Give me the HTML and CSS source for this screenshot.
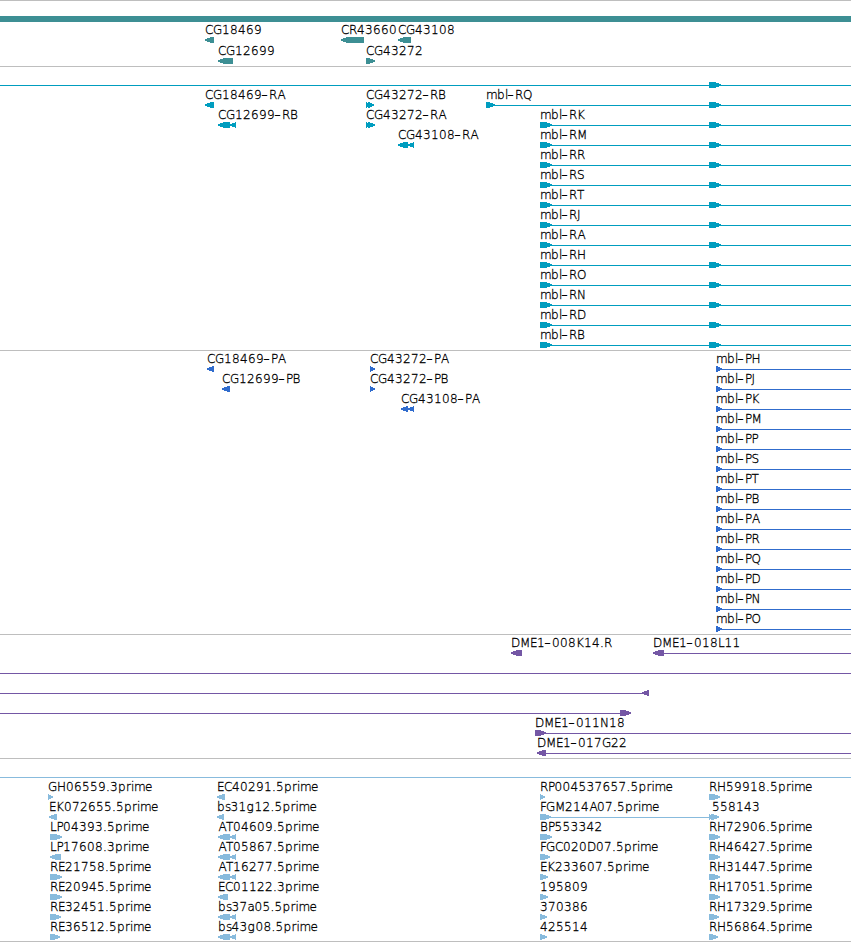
FILE: index.html
```html
<!DOCTYPE html>
<html lang="en">
<head>
    <meta charset="UTF-8">
    <title>mbl region</title>
    <link rel="stylesheet" href="styles.css">
</head>
<body>
    <div class="browser">
        <div class="track track-gene" id="gene"></div>
        <div class="track track-mrna" id="mrna"></div>
        <div class="track track-cds" id="cds"></div>
        <div class="track track-bac" id="bac"></div>
        <div class="track track-est" id="est"></div>
    </div>
    <script src="tracks.js"></script>
</body>
</html>
```
FILE: styles.css
```css
body {
    margin: 0;
    background-color: #fff;
    overflow: hidden;
}
.browser {
    display: flex;
    flex-direction: column;
    width: 851px;
    height: 942px;
    box-sizing: border-box;
    border-top: 1px solid #bebebe;
}
.track {
    box-sizing: border-box;
    padding-top: 3px;
    border-bottom: 1px solid #bebebe;
}
.track-gene { height: 66px; color: #3d8f94; }
.track-mrna { height: 284px; color: #009dbf; }
.track-cds { height: 284px; color: #306ccd; }
.track-bac { height: 124px; color: #7457a5; }
.track-est { height: 183px; color: #88bbdd; }

.row {
    display: block;
    width: 851px;
    height: 20px;
    overflow: visible;
}
.track-gene .row {
    height: 21px;
}
.glyph {
    fill: currentColor;
    shape-rendering: crispEdges;
}
.label {
    fill: #000;
    stroke: #000;
    stroke-width: 0.3px;
    font-family: "DejaVu Sans", sans-serif;
    font-size: 12px;
    font-weight: 200;
}
```
FILE: tracks.js
```js
// advance of each character in a label, in pixels
const adv = {
    A: 8, B: 8, C: 8, D: 9, E: 7, F: 6, G: 9, H: 9, J: 4, K: 8, L: 6.5, M: 10, N: 9,
    O: 9, P: 6.5, Q: 9, R: 8, S: 8, T: 7, a: 7, b: 8, e: 7, g: 8, i: 3, l: 3, m: 11,
    p: 8, r: 5, s: 5.5, '.': 4, '-': 7
};

// features: ['t', x, text] label, ['l' | 'r', x1, x2] arrow, ['-', x1, x2] line, ['b', x1, x2] bar
function label(x, text) {
    const xs = [];
    let pos = x;
    for (const c of text) {
        xs.push(c === '-' ? pos - 0.5 : c === 'A' ? pos + 0.5 : pos);
        pos += adv[c] || 8;
    }
    return `<text class="label" x="${xs.join(' ')}" y="9">${text.replace(/-/g, '–')}</text>`;
}

function arrow(dir, a, b) {
    const head = Math.min(7, b - a);
    const s = dir === 'l' ? 1 : -1;
    const tip = dir === 'l' ? a : b;
    const end = dir === 'l' ? b : a;
    const n = tip + s * head;
    const m = tip + s * head / 2;
    return `<polygon class="glyph" points="${end},12 ${n},12 ${m},13 ${tip},14.5 ${tip},15.5 ${m},17 ${n},18 ${end},18"/>`;
}

function draw(f) {
    const [kind, a, b] = f;
    if (kind === 't') return label(a, b);
    if (kind === '-') return `<rect class="glyph" x="${a}" y="15" width="${b - a}" height="1"/>`;
    if (kind === 'b') return `<rect class="glyph" x="${a}" y="12" width="${b - a}" height="6"/>`;
    return arrow(kind, a, b);
}

function render(id, rows) {
    document.getElementById(id).innerHTML = rows
        .map(r => `<svg class="row">${r.map(draw).join('')}</svg>`)
        .join('');
}

render('gene', [
    [['b', 0, 851]],
    [['t', 205, 'CG18469'], ['l', 205, 214], ['t', 341, 'CR43660'], ['l', 341, 364], ['t', 398, 'CG43108'], ['l', 398, 411]],
    [['t', 218, 'CG12699'], ['l', 218, 233], ['t', 366, 'CG43272'], ['r', 366, 375]]
]);

const mrna = [
    [['-', 0, 851], ['r', 709, 721]],
    [['t', 205, 'CG18469-RA'], ['l', 205, 214], ['t', 366, 'CG43272-RB'], ['r', 366, 371], ['r', 368, 374],
        ['t', 486, 'mbl-RQ'], ['r', 486, 495], ['-', 490, 851], ['r', 709, 721]]
];
for (const c of 'KMRSTJAHONDB') {
    mrna.push([['t', 540, 'mbl-R' + c], ['r', 540, 552], ['-', 545, 851], ['r', 709, 721]]);
}
mrna[2].push(['t', 218, 'CG12699-RB'], ['l', 218, 230], ['l', 230, 236], ['t', 366, 'CG43272-RA'], ['r', 366, 371], ['r', 368, 375]);
mrna[3].push(['t', 398, 'CG43108-RA'], ['l', 398, 408], ['l', 408, 414]);
render('mrna', mrna);

const cds = [];
for (const c of 'HJKMPSTBARQDNO') {
    cds.push([['t', 716, 'mbl-P' + c], ['r', 716, 722], ['-', 720, 851]]);
}
cds[0].push(['t', 207, 'CG18469-PA'], ['l', 207, 214], ['t', 370, 'CG43272-PA'], ['r', 370, 375]);
cds[1].push(['t', 222, 'CG12699-PB'], ['l', 222, 230], ['t', 370, 'CG43272-PB'], ['r', 370, 375]);
cds[2].push(['t', 401, 'CG43108-PA'], ['l', 401, 408], ['l', 408, 414]);
render('cds', cds);

render('bac', [
    [['t', 511, 'DME1-008K14.R'], ['l', 511, 522], ['t', 653, 'DME1-018L11'], ['l', 653, 664], ['-', 660, 851]],
    [['-', 0, 851]],
    [['-', 0, 645], ['l', 642, 649]],
    [['-', 0, 622], ['r', 620, 631]],
    [['t', 535, 'DME1-011N18'], ['r', 535, 546], ['-', 540, 851]],
    [['t', 537, 'DME1-017G22'], ['l', 537, 546], ['-', 540, 851]]
]);

render('est', [
    [['-', 0, 851]],
    [['t', 48, 'GH06559.3prime'], ['r', 48, 53], ['t', 217, 'EC40291.5prime'], ['l', 217, 225],
        ['t', 540, 'RP004537657.5prime'], ['r', 540, 545], ['t', 709, 'RH59918.5prime'], ['r', 709, 720]],
    [['t', 49, 'EK072655.5prime'], ['l', 49, 57], ['t', 217, 'bs31g12.5prime'], ['l', 217, 224],
        ['t', 540, 'FGM214A07.5prime'], ['r', 540, 551], ['-', 545, 710], ['t', 712, '558143'], ['r', 709, 714], ['r', 711, 719]],
    [['t', 50, 'LP04393.5prime'], ['r', 50, 62], ['t', 218, 'AT04609.5prime'], ['l', 218, 230], ['l', 230, 236],
        ['t', 540, 'BP553342'], ['r', 540, 552], ['t', 709, 'RH72906.5prime'], ['r', 709, 720]],
    [['t', 50, 'LP17608.3prime'], ['l', 50, 61], ['t', 218, 'AT05867.5prime'], ['l', 218, 230], ['l', 230, 236],
        ['t', 540, 'FGC020D07.5prime'], ['r', 540, 550], ['t', 709, 'RH46427.5prime'], ['r', 709, 720]],
    [['t', 50, 'RE21758.5prime'], ['r', 50, 62], ['t', 218, 'AT16277.5prime'], ['l', 218, 230], ['l', 230, 236],
        ['t', 540, 'EK233607.5prime'], ['r', 540, 548], ['t', 709, 'RH31447.5prime'], ['r', 709, 720]],
    [['t', 50, 'RE20945.5prime'], ['r', 50, 62], ['t', 218, 'EC01122.3prime'], ['l', 218, 228],
        ['t', 540, '195809'], ['r', 540, 548], ['t', 709, 'RH17051.5prime'], ['r', 709, 720]],
    [['t', 50, 'RE32451.5prime'], ['r', 50, 61], ['t', 218, 'bs37a05.5prime'], ['l', 218, 230], ['l', 230, 236],
        ['t', 540, '370386'], ['r', 540, 547], ['t', 709, 'RH17329.5prime'], ['r', 709, 719]],
    [['t', 50, 'RE36512.5prime'], ['r', 50, 60], ['t', 218, 'bs43g08.5prime'], ['l', 218, 230], ['l', 230, 236],
        ['t', 540, '425514'], ['r', 540, 547], ['t', 709, 'RH56864.5prime'], ['r', 709, 718]]
]);
```
